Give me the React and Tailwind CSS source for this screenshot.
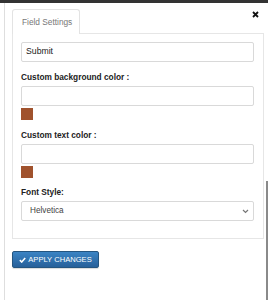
import React from 'react';

function Swatch() {
  return <div className="w-[12px] h-[12px] bg-[#a0522d] mt-[2px]" />;
}

function TextInput({ value }) {
  return (
    <div className="h-[20px] w-full border border-[#d9d9d9] rounded-[2px] bg-white flex items-center px-[4px] text-[8.7px] text-[#222]">
      {value}
    </div>
  );
}

function Label({ children, className = '' }) {
  return <div className={`h-[12px] leading-[12px] text-[8.3px] font-bold text-[#222] ${className}`}>{children}</div>;
}

export default function App() {
  return (
    <div
      className="relative w-[268px] h-[300px] bg-white border-t-[3px] border-[#333] overflow-hidden"
      style={{ fontFamily: '"Liberation Sans", Arial, sans-serif' }}
    >
      <div className="ml-[4px] h-full border-l border-[#dedede] pl-[7px] pt-[5px]">
        {/* Tab */}
        <div className="flex">
          <div className="h-[25px] w-[68px] border border-b-0 border-[#e3e3e3] rounded-t-[3px] bg-white flex items-center pl-[9px] whitespace-nowrap text-[8.3px] text-[#777] relative top-[1px]">
            Field Settings
          </div>
        </div>

        {/* Panel */}
        <div className="w-[252px] border border-[#e6e6e6] pl-[8px] pr-[9px] pt-[8px] pb-[17px]">
          <TextInput value="Submit" />
          <Label className="mt-[9px]">Custom background color :</Label>
          <div className="mt-[3px]"><TextInput value="" /></div>
          <Swatch />
          <Label className="mt-[9px]">Custom text color :</Label>
          <div className="mt-[3px]"><TextInput value="" /></div>
          <Swatch />
          <Label className="mt-[8px]">Font Style:</Label>
          <div className="mt-[3px] h-[20px] border border-[#d9d9d9] rounded-[2px] bg-white flex items-center justify-between pl-[8px] pr-[4px] text-[8.2px] text-[#444]">
            <span>Helvetica</span>
            <svg width="7" height="5" viewBox="0 0 7 5">
              <path d="M1 1 L3.5 3.5 L6 1" fill="none" stroke="#777" strokeWidth="1.2" />
            </svg>
          </div>
        </div>

        {/* Button */}
        <button className="mt-[12px] h-[17px] w-[87px] rounded-[2px] border border-[#245580] bg-gradient-to-b from-[#3b84c4] to-[#27609a] text-white text-[7.6px] flex items-center justify-center gap-[2px] shadow-[0_1px_1px_rgba(0,0,0,0.15)]">
          <svg width="7" height="6" viewBox="0 0 7 6">
            <path d="M0.8 3.2 L2.7 5 L6.2 1" fill="none" stroke="white" strokeWidth="1.6" />
          </svg>
          <span>APPLY CHANGES</span>
        </button>
      </div>

      {/* Close */}
      <svg className="absolute left-[252px] top-[8px]" width="7" height="7" viewBox="0 0 7 7">
        <path d="M1 1 L6 6 M6 1 L1 6" stroke="#111" strokeWidth="1.8" />
      </svg>

      {/* Scrollbar */}
      <div className="absolute left-[266px] top-[178px] w-[2px] h-[122px] bg-[#8a8a8a]" />
    </div>
  );
}
